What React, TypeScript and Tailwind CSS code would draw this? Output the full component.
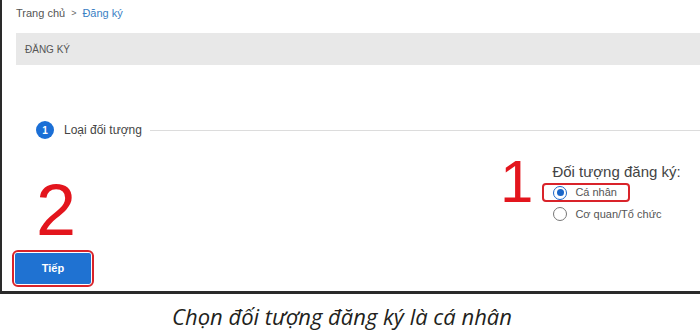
export default function App() {
  return (
    <div className="w-[700px] h-[333px] bg-white font-['Liberation_Sans',Arial,sans-serif] overflow-hidden">
      {/* Screenshot frame */}
      <div className="h-[294px] border-l-2 border-b-[3px] border-[#2a2a2a] pl-[14px] flex flex-col">
        {/* Breadcrumb */}
        <div className="pt-[6px] text-[11px] leading-[14px] text-[#555] flex items-center">
          <span>Trang chủ</span>
          <span className="mx-[6px] text-[9px] text-[#666]">&gt;</span>
          <span className="text-[#3b7fc4]">Đăng ký</span>
        </div>

        {/* Page title bar */}
        <div className="mt-[13px] h-[32px] bg-[#e8e8e8] flex items-center pl-[9px] text-[10px] text-[#555]">
          ĐĂNG KÝ
        </div>

        {/* Stepper */}
        <div className="mt-[56px] h-[18px] flex items-center">
          <span className="ml-[20px] w-[18px] h-[18px] rounded-full bg-[#1b6fd6] text-white text-[10px] font-bold flex items-center justify-center">
            1
          </span>
          <span className="ml-[10px] text-[12px] text-[#444]">Loại đối tượng</span>
          <span className="ml-[8px] flex-1 h-px bg-[#dcdcdc]" />
        </div>

        {/* Lower area */}
        <div className="flex flex-1">
          {/* Left: annotation 2 + button */}
          <div className="w-[100px] flex flex-col">
            <span className="mt-[35px] ml-[20px] text-[72px] leading-[72px] text-[#e3151d]">2</span>
            <div className="mt-[4px] -ml-[4px] w-fit border-2 border-[#d9232a] rounded-[6px] p-[1px]">
              <button className="w-[76px] h-[31px] bg-[#1f72d2] text-white text-[11px] font-bold rounded-[2px]">
                Tiếp
              </button>
            </div>
          </div>

          {/* Right: annotation 1 + form */}
          <div className="ml-[384px] flex items-start">
            <span className="mt-[13px] text-[60px] leading-[60px] text-[#e3151d]">1</span>
            <div className="mt-[24px] ml-[19px] flex flex-col">
              <span className="text-[15px] leading-[18px] text-[#444] whitespace-nowrap">Đối tượng đăng ký:</span>
              <div className="mt-[2px] -ml-[10px] w-fit h-[19px] border-2 border-[#d9232a] rounded-[4px] pl-[9px] pr-[11px] flex items-center">
                <span className="w-[14px] h-[14px] rounded-full border-[1.5px] border-[#1a66c8] flex items-center justify-center">
                  <span className="w-[7px] h-[7px] rounded-full bg-[#1a66c8]" />
                </span>
                <span className="ml-[8px] text-[11px] text-[#555]">Cá nhân</span>
              </div>
              <div className="mt-[5px] ml-[1px] h-[14px] flex items-center">
                <span className="w-[14px] h-[14px] rounded-full border border-[#777]" />
                <span className="ml-[8px] text-[11px] text-[#555] whitespace-nowrap">Cơ quan/Tổ chức</span>
              </div>
            </div>
          </div>
        </div>
      </div>

      {/* Caption */}
      <div className="h-[39px] pt-[5px] pr-[16px] flex items-center justify-center font-['Open_Sans',sans-serif] italic text-[22px] text-[#231f20]">
        Chọn đối tượng đăng ký là cá nhân
      </div>
    </div>
  );
}
